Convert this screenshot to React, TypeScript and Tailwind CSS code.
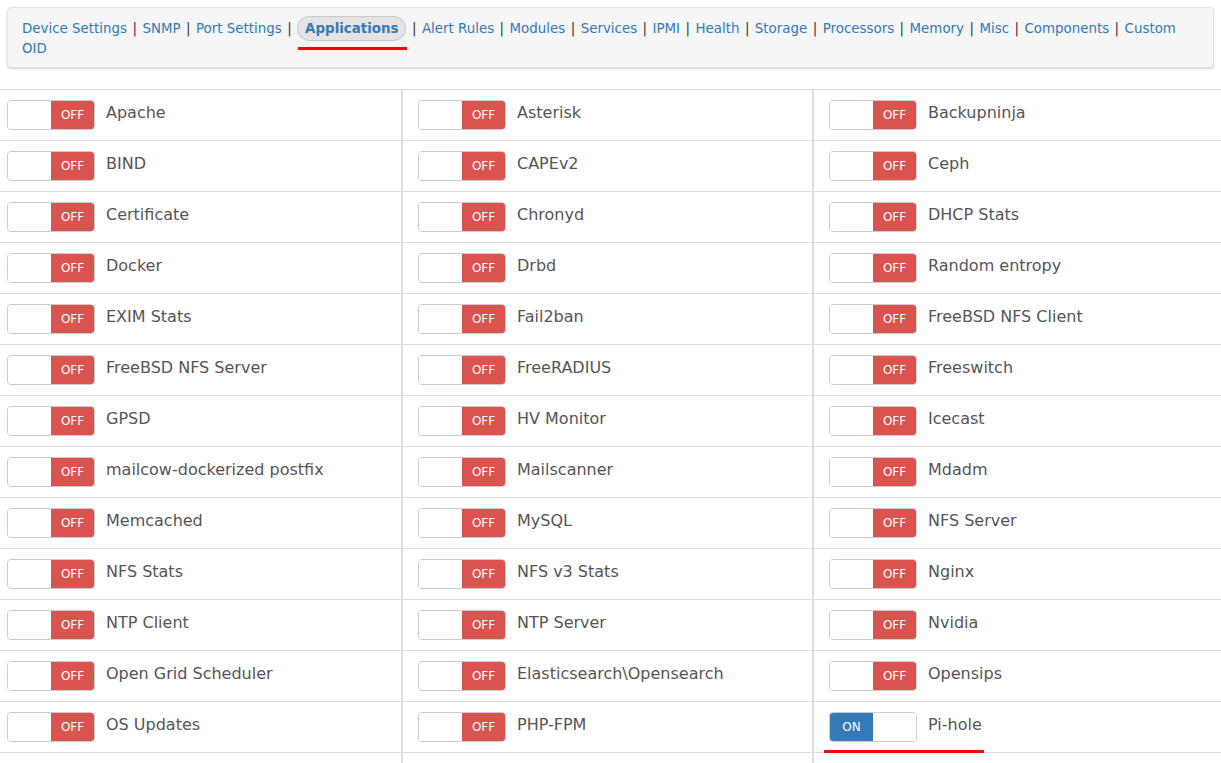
import { Fragment } from 'react'

const navLinks = [
  'Device Settings',
  'SNMP',
  'Port Settings',
  'Applications',
  'Alert Rules',
  'Modules',
  'Services',
  'IPMI',
  'Health',
  'Storage',
  'Processors',
  'Memory',
  'Misc',
  'Components',
  'Custom OID',
]

const columns: string[][] = [
  [
    'Apache',
    'BIND',
    'Certificate',
    'Docker',
    'EXIM Stats',
    'FreeBSD NFS Server',
    'GPSD',
    'mailcow-dockerized postfix',
    'Memcached',
    'NFS Stats',
    'NTP Client',
    'Open Grid Scheduler',
    'OS Updates',
  ],
  [
    'Asterisk',
    'CAPEv2',
    'Chronyd',
    'Drbd',
    'Fail2ban',
    'FreeRADIUS',
    'HV Monitor',
    'Mailscanner',
    'MySQL',
    'NFS v3 Stats',
    'NTP Server',
    'Elasticsearch\\Opensearch',
    'PHP-FPM',
  ],
  [
    'Backupninja',
    'Ceph',
    'DHCP Stats',
    'Random entropy',
    'FreeBSD NFS Client',
    'Freeswitch',
    'Icecast',
    'Mdadm',
    'NFS Server',
    'Nginx',
    'Nvidia',
    'Opensips',
    'Pi-hole',
  ],
]

function Toggle({ on }: { on: boolean }) {
  return (
    <div className="flex h-[30px] w-[88px] shrink-0 overflow-hidden rounded-[4px] border border-[#cccccc] bg-white text-[12px] text-white">
      {on ? (
        <>
          <span className="flex w-[43px] items-center justify-center bg-[#337ab7]">ON</span>
          <span className="flex-1 bg-white" />
        </>
      ) : (
        <>
          <span className="flex-1 bg-white" />
          <span className="flex w-[43px] items-center justify-center bg-[#d9534f]">OFF</span>
        </>
      )}
    </div>
  )
}

export default function App() {
  return (
    <div
      className="min-h-[763px] bg-white text-[#555555]"
      style={{ fontFamily: '"DejaVu Sans", "Liberation Sans", sans-serif' }}
    >
      <div className="px-[7px] pt-[7px]">
        <div className="rounded-[4px] border border-[#e3e3e3] bg-[#f5f5f5] px-[14px] pt-[11px] pb-[8px] text-[13.4px] leading-[20px] shadow-[0_1px_2px_rgba(0,0,0,0.18)]">
          {navLinks.map((link, i) => (
            <Fragment key={link}>
              {i > 0 && <span className="mx-[1.2px] text-[#333333]"> | </span>}
              {link === 'Applications' ? (
                <span className="relative">
                  <span className="rounded-full border border-[#c8c8c8] bg-[#e4e4e4] px-[7px] py-[4px] font-bold text-[#337ab7]">
                    {link}
                  </span>
                  <span className="absolute left-[1px] right-[-1px] top-[26px] h-[3px] bg-[#ff0000]" />
                </span>
              ) : (
                <span className="text-[#337ab7]">{link}</span>
              )}
            </Fragment>
          ))}
        </div>
      </div>

      <div className="mt-[21px] grid grid-cols-[403px_411px_1fr] border-t border-[#dddddd]">
        {columns.map((items, ci) => (
          <div
            key={ci}
            className={ci < 2 ? 'border-r-2 border-[#dddddd]' : ''}
          >
            {items.map((name) => {
              const on = name === 'Pi-hole'
              return (
                <div
                  key={name}
                  className={`relative flex h-[51px] items-center gap-[11px] border-b border-[#dddddd] pb-px ${
                    ci === 0 ? 'pl-[7px]' : 'pl-[15px]'
                  }`}
                >
                  <Toggle on={on} />
                  <span className="pb-[4px] text-[16px] leading-[22px] text-[#555555]">{name}</span>
                  {on && (
                    <span className="absolute left-[10px] top-[48px] h-[3px] w-[160px] bg-[#ff0000]" />
                  )}
                </div>
              )
            })}
            <div className="h-[40px]" />
          </div>
        ))}
      </div>
    </div>
  )
}
